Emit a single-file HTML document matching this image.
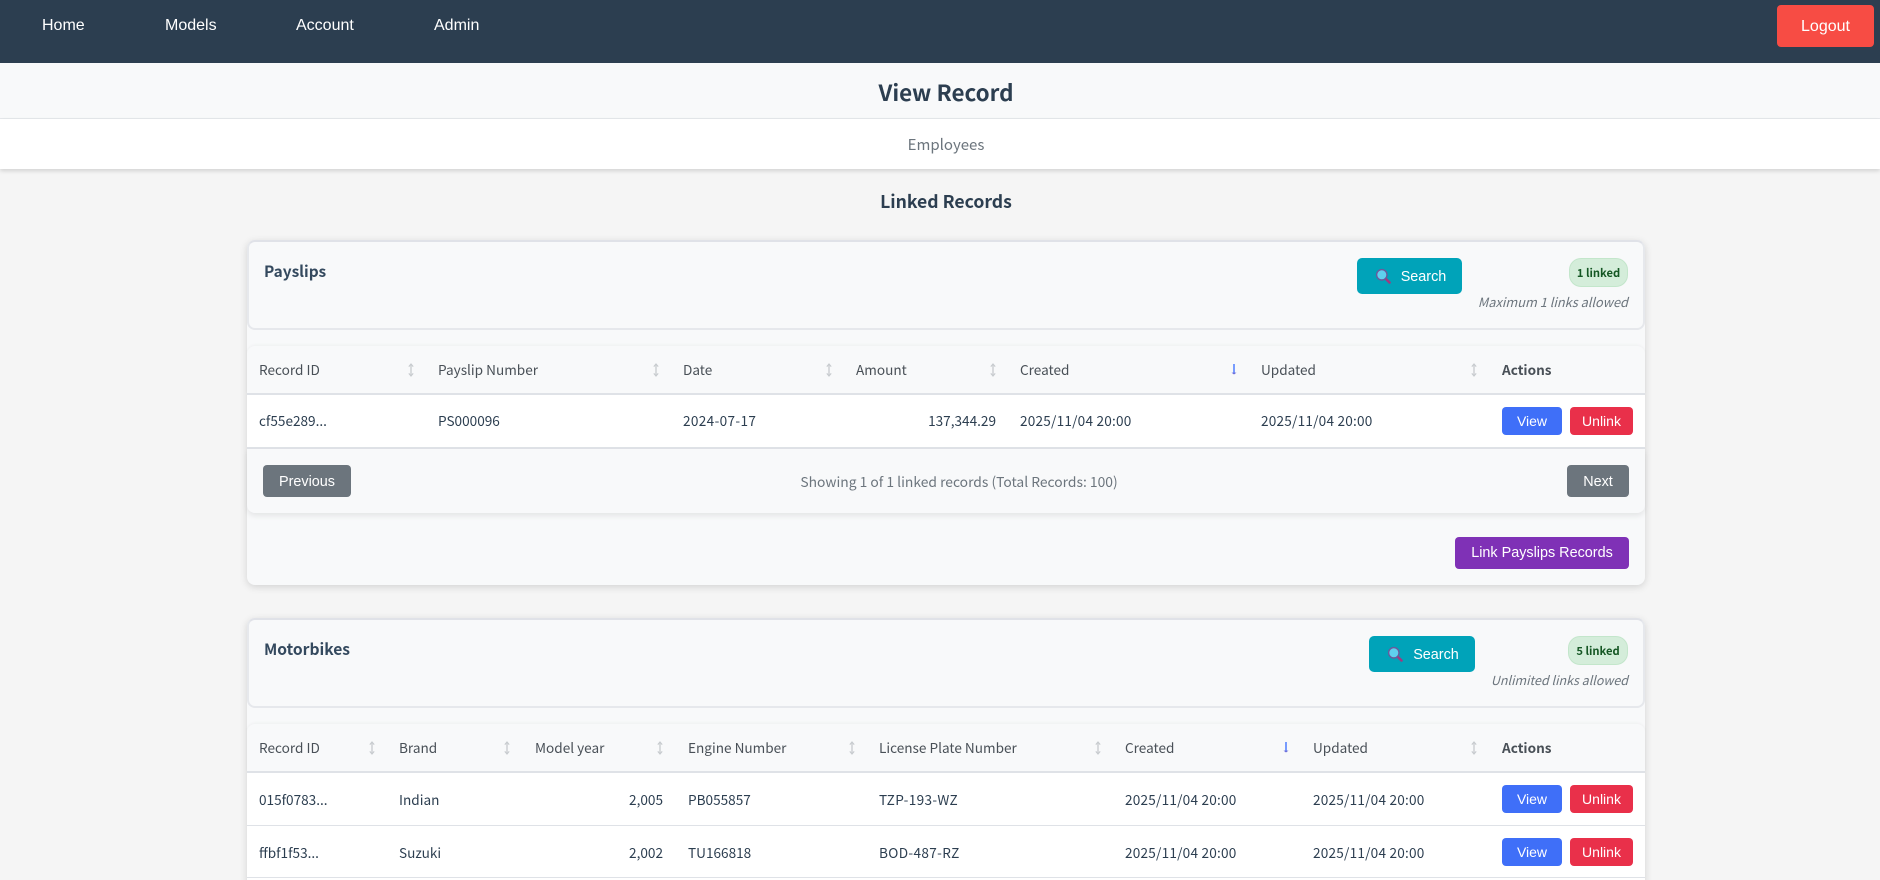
<!DOCTYPE html>
<html lang="en"><head><meta charset="utf-8"><title>View Record</title>
<style>
*{box-sizing:border-box}
html,body{margin:0;padding:0;width:1880px;height:880px;overflow:hidden;background:#f5f5f5}
body{position:relative;font-family:"Noto Sans CJK JP","Liberation Sans",sans-serif;color:#2c3e50}
div,span,svg.a{position:absolute}
.t{white-space:nowrap;line-height:20px;height:20px}
.ar{font-family:"Liberation Sans",Arial,sans-serif}
.nav{font-size:16px;color:#fff;top:16px}
.c{text-align:center}
.btn{border-radius:4px;color:#fff;font-family:"Liberation Sans",Arial,sans-serif;text-align:center;white-space:nowrap}
.card{left:247px;width:1398px;background:#f8f9fa;border-radius:8px;box-shadow:0 2px 8px rgba(0,0,0,.14)}
.hd{left:247px;width:1398px;background:#f8f9fa;border:2px solid #e6e8ec;border-top-color:#e0e2e8;border-radius:8px}
.tw{left:247px;width:1398px;background:#f8f9fa;border-radius:8px 8px 0 0;box-shadow:0 -1px 3px rgba(0,0,0,.04)}
.white{left:247px;width:1398px;background:#fff}
.ln{left:247px;width:1398px;background:#dfe2e7}
.th{font-size:13.6px;color:#495057}
.td{font-size:13.6px;color:#2c3e50}
.dt{letter-spacing:.22px}
.hy{letter-spacing:.35px}
.title{font-size:15.4px;font-weight:600;color:#34495e}
.v{background:#3f6ff8;font-size:14px;width:60px;height:28px;line-height:28px;left:1502px;border-radius:4px}
.u{background:#e9304a;font-size:14px;width:63px;height:28px;line-height:28px;left:1570px;border-radius:4px}
.s{background:#00a3b9;height:36px;line-height:38px;font-size:14.4px;border-radius:5px;top:0}
.badge{background:#d4edda;border:1px solid #c3e6cb;border-radius:12px;height:29px;line-height:28px;font-size:11.2px;font-weight:600;color:#155724;text-align:center;white-space:nowrap}
.note{font-style:italic;color:#6c757d;text-align:right;left:1328px;width:300px}
.pg{background:#6c757d;height:32px;line-height:34px;font-size:14.4px}
</style></head><body>
<svg width="0" height="0" style="position:absolute"><defs>
<g id="sort"><path d="M5 1.5V12.5" stroke="#d0d3d6" stroke-width="1.6" fill="none"/><path d="M2.8 3.6L5 1 7.2 3.6M2.8 10.4L5 13 7.2 10.4" stroke="#c6cacd" stroke-width="1.1" fill="none"/></g>
<g id="down"><path d="M5 1V10" stroke="#4d7dff" stroke-width="1.5" fill="none"/><path d="M2.5 9.6H7.5L5 11.5Z" fill="#6a6ad8"/></g>
<g id="mag"><path d="M10.5 10.5L14.5 14.5" stroke="#a03a80" stroke-width="2.6" stroke-linecap="round"/><circle cx="6.8" cy="6.8" r="5.2" fill="#5fd0ee" stroke="#6a5a9c" stroke-width="1.4"/></g>
</defs></svg>

<div style="left:0;top:0;width:1880px;height:63px;background:#2c3e50"></div>
<span class="t ar nav" style="left:42px">Home</span>
<span class="t ar nav" style="left:165px">Models</span>
<span class="t ar nav" style="left:296px">Account</span>
<span class="t ar nav" style="left:434px">Admin</span>
<div class="btn" style="left:1777px;top:5px;width:97px;height:42px;line-height:44px;background:#f74c44;font-size:16px;border-radius:4px">Logout</div>

<div style="left:0;top:63px;width:1880px;height:56px;background:#f8f9fa;border-bottom:1px solid #e6e9ec"></div>
<div style="left:0;top:119px;width:1880px;height:50px;background:#fff;box-shadow:0 2px 4px rgba(0,0,0,.14)"></div>
<span class="t c" style="left:646px;width:600px;top:77px;height:30px;line-height:30px;font-size:22.4px;font-weight:600;color:#2c3e50">View Record</span>
<span class="t c" style="left:646px;width:600px;top:135px;font-size:15px;color:#6c757d">Employees</span>
<span class="t c" style="left:646px;width:600px;top:192px;font-size:17.6px;font-weight:600;color:#2c3e50">Linked Records</span>

<!-- Payslips card -->
<div class="card" style="top:240px;height:345px"></div>
<div class="hd" style="top:240px;height:90px"></div>
<span class="t title" style="left:264px;top:261px">Payslips</span>
<div class="btn s" style="left:1357px;top:258px;width:105px;padding-left:28px">Search</div>
<svg class="a" style="left:1375px;top:268px" width="16" height="16"><use href="#mag"/></svg>
<div class="badge" style="left:1569px;top:258px;width:59px">1 linked</div>
<div class="t note" style="top:292px;font-size:12.8px">Maximum 1 links allowed</div>

<div class="tw" style="top:346px;height:47px"></div>
<div class="ln" style="top:393px;height:2px"></div>
<div class="white" style="top:395px;height:52px"></div>
<div class="ln" style="top:447px;height:2px"></div>
<div style="left:247px;top:449px;width:1398px;height:64px;background:#f8f9fa;border-radius:0 0 8px 8px;box-shadow:0 3px 6px rgba(0,0,0,.08)"></div>

<span class="t th" style="left:259px;top:359px">Record ID</span>
<span class="t th" style="left:438px;top:359px">Payslip Number</span>
<span class="t th" style="left:683px;top:359px">Date</span>
<span class="t th" style="left:856px;top:359px">Amount</span>
<span class="t th" style="left:1020px;top:359px">Created</span>
<span class="t th" style="left:1261px;top:359px">Updated</span>
<span class="t th" style="left:1502px;top:359px;font-weight:600">Actions</span>
<svg class="a" style="left:406px;top:363px" width="10" height="14"><use href="#sort"/></svg>
<svg class="a" style="left:651px;top:363px" width="10" height="14"><use href="#sort"/></svg>
<svg class="a" style="left:824px;top:363px" width="10" height="14"><use href="#sort"/></svg>
<svg class="a" style="left:988px;top:363px" width="10" height="14"><use href="#sort"/></svg>
<svg class="a" style="left:1229px;top:363px" width="10" height="14"><use href="#down"/></svg>
<svg class="a" style="left:1469px;top:363px" width="10" height="14"><use href="#sort"/></svg>

<span class="t td" style="left:259px;top:410px">cf55e289...</span>
<span class="t td" style="left:438px;top:410px">PS000096</span>
<span class="t td hy" style="left:683px;top:410px">2024-07-17</span>
<span class="t td" style="left:796px;width:200px;text-align:right;top:410px">137,344.29</span>
<span class="t td dt" style="left:1020px;top:410px">2025/11/04 20:00</span>
<span class="t td dt" style="left:1261px;top:410px">2025/11/04 20:00</span>
<div class="btn v" style="top:407px">View</div>
<div class="btn u" style="top:407px">Unlink</div>

<div class="btn pg" style="left:263px;top:465px;width:88px">Previous</div>
<span class="t c" style="left:659px;width:600px;top:471px;font-size:13.85px;color:#6c757d">Showing 1 of 1 linked records (Total Records: 100)</span>
<div class="btn pg" style="left:1567px;top:465px;width:62px">Next</div>
<div class="btn" style="left:1455px;top:537px;width:174px;height:32px;line-height:32px;background:#7f31b6;font-size:14.4px">Link Payslips Records</div>

<!-- Motorbikes card -->
<div class="card" style="top:618px;height:300px"></div>
<div class="hd" style="top:618px;height:90px"></div>
<span class="t title" style="left:264px;top:639px;font-size:15.6px">Motorbikes</span>
<div class="btn s" style="left:1369px;top:636px;width:106px;padding-left:28px">Search</div>
<svg class="a" style="left:1387px;top:646px" width="16" height="16"><use href="#mag"/></svg>
<div class="badge" style="left:1568px;top:636px;width:60px">5 linked</div>
<div class="t note" style="top:670px;font-size:12.5px">Unlimited links allowed</div>

<div class="tw" style="top:724px;height:47px"></div>
<div class="ln" style="top:771px;height:2px"></div>
<div class="white" style="top:773px;height:107px"></div>
<div class="ln" style="top:825px;height:1px"></div>
<div class="ln" style="top:877px;height:1px"></div>

<span class="t th" style="left:259px;top:737px">Record ID</span>
<span class="t th" style="left:399px;top:737px">Brand</span>
<span class="t th" style="left:535px;top:737px">Model year</span>
<span class="t th" style="left:688px;top:737px">Engine Number</span>
<span class="t th" style="left:879px;top:737px">License Plate Number</span>
<span class="t th" style="left:1125px;top:737px">Created</span>
<span class="t th" style="left:1313px;top:737px">Updated</span>
<span class="t th" style="left:1502px;top:737px;font-weight:600">Actions</span>
<svg class="a" style="left:367px;top:741px" width="10" height="14"><use href="#sort"/></svg>
<svg class="a" style="left:502px;top:741px" width="10" height="14"><use href="#sort"/></svg>
<svg class="a" style="left:655px;top:741px" width="10" height="14"><use href="#sort"/></svg>
<svg class="a" style="left:847px;top:741px" width="10" height="14"><use href="#sort"/></svg>
<svg class="a" style="left:1093px;top:741px" width="10" height="14"><use href="#sort"/></svg>
<svg class="a" style="left:1281px;top:741px" width="10" height="14"><use href="#down"/></svg>
<svg class="a" style="left:1469px;top:741px" width="10" height="14"><use href="#sort"/></svg>

<span class="t td" style="left:259px;top:789px">015f0783...</span>
<span class="t td" style="left:399px;top:789px">Indian</span>
<span class="t td" style="left:463px;width:200px;text-align:right;top:789px">2,005</span>
<span class="t td" style="left:688px;top:789px">PB055857</span>
<span class="t td hy" style="left:879px;top:789px">TZP-193-WZ</span>
<span class="t td dt" style="left:1125px;top:789px">2025/11/04 20:00</span>
<span class="t td dt" style="left:1313px;top:789px">2025/11/04 20:00</span>
<div class="btn v" style="top:785px">View</div>
<div class="btn u" style="top:785px">Unlink</div>

<span class="t td" style="left:259px;top:842px">ffbf1f53...</span>
<span class="t td" style="left:399px;top:842px">Suzuki</span>
<span class="t td" style="left:463px;width:200px;text-align:right;top:842px">2,002</span>
<span class="t td" style="left:688px;top:842px">TU166818</span>
<span class="t td hy" style="left:879px;top:842px">BOD-487-RZ</span>
<span class="t td dt" style="left:1125px;top:842px">2025/11/04 20:00</span>
<span class="t td dt" style="left:1313px;top:842px">2025/11/04 20:00</span>
<div class="btn v" style="top:838px">View</div>
<div class="btn u" style="top:838px">Unlink</div>
</body></html>
